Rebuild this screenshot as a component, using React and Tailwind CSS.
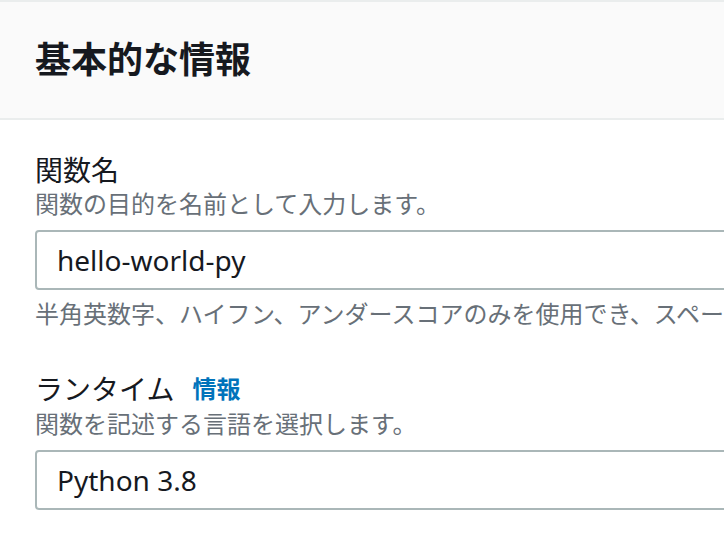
export default function App() {
  const font = { fontFamily: '"Noto Sans", "Noto Sans CJK JP", sans-serif' };
  return (
    <div className="w-[724px] h-[538px] overflow-hidden bg-white" style={font}>
      <div className="w-[1000px]">
        <div className="h-[2px] bg-[#eaeded]" />
        <div className="h-[116px] bg-[#fafafa] flex items-center px-[35px]">
          <h2 className="text-[36px] leading-[44px] font-bold text-[#16191f]">基本的な情報</h2>
        </div>
        <div className="h-[2px] bg-[#eaeded]" />
        <div className="pl-[35px] pt-[32px]">
          <div className="text-[28px] leading-[36px] text-[#16191f]">関数名</div>
          <div className="text-[24px] leading-[32px] text-[#687078]">関数の目的を名前として入力します。</div>
          <div className="mt-[10px] h-[60px] border-2 border-[#aab7b8] rounded-[4px] flex items-center px-[20px]">
            <span className="text-[28px] text-[#16191f]">hello-world-py</span>
          </div>
          <div className="mt-[8px] text-[24px] leading-[32px] text-[#687078] whitespace-nowrap">
            半角英数字、ハイフン、アンダースコアのみを使用でき、スペースは使用できません。
          </div>
          <div className="mt-[41px] flex items-center">
            <span className="text-[28px] leading-[36px] text-[#16191f]">ランタイム</span>
            <a className="ml-[18px] text-[24px] leading-[36px] font-bold text-[#0073bb]">情報</a>
          </div>
          <div className="mt-[1px] text-[24px] leading-[32px] text-[#687078]">関数を記述する言語を選択します。</div>
          <div className="mt-[10px] h-[60px] border-2 border-[#aab7b8] rounded-[4px] flex items-center px-[20px]">
            <span className="text-[28px] text-[#16191f]">Python 3.8</span>
          </div>
        </div>
      </div>
    </div>
  );
}
